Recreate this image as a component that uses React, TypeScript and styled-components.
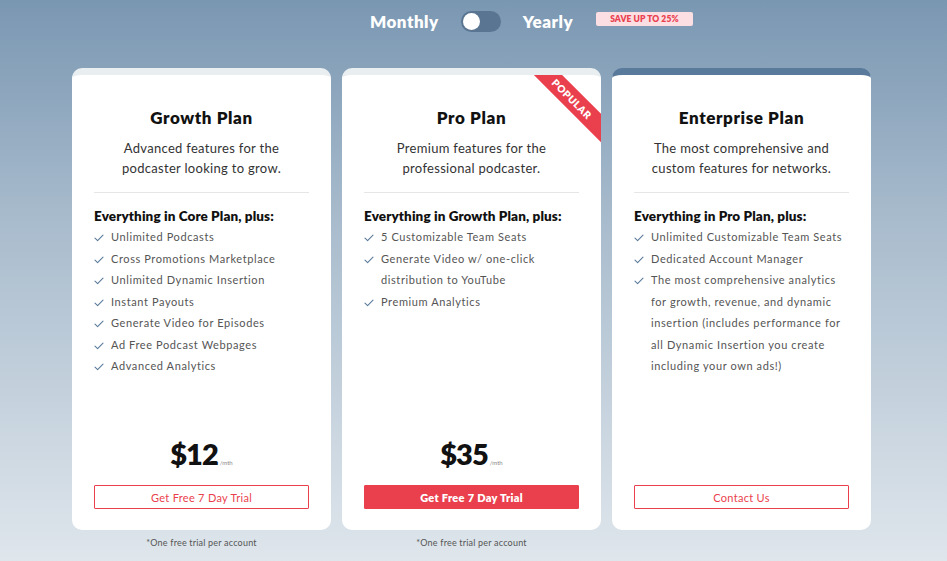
import React from "react";
import styled, { createGlobalStyle } from "styled-components";

const Global = createGlobalStyle`
  html, body { margin: 0; padding: 0; }
  body {
    font-family: "Lato", "Noto Sans", sans-serif;
    background: #dfe6ec;
  }
  * { box-sizing: border-box; }
`;

const Page = styled.div`
  width: 947px;
  height: 561px;
  overflow: hidden;
  padding-right: 4px;
  background: linear-gradient(180deg, #7a97b2 0%, #a9bccd 40%, #dfe6ec 100%);
  display: flex;
  flex-direction: column;
  align-items: center;
`;

const Header = styled.div`
  position: relative;
  display: flex;
  align-items: center;
  gap: 22px;
  height: 43px;
`;

const Label = styled.span`
  color: #ffffff;
  font-size: 17px;
  font-weight: 800;
  letter-spacing: 0.5px;
`;

const Track = styled.div`
  width: 40px;
  height: 21px;
  border-radius: 11px;
  background: #5a7591;
  padding: 2px;
  display: flex;
  align-items: center;
`;

const Knob = styled.div`
  width: 17px;
  height: 17px;
  border-radius: 50%;
  background: #ffffff;
`;

const Badge = styled.span`
  position: absolute;
  left: 226px;
  top: 12px;
  width: 97px;
  height: 14px;
  border-radius: 2px;
  background: #fcdfe2;
  color: #e8404f;
  font-size: 8.5px;
  font-weight: 800;
  display: flex;
  align-items: center;
  justify-content: center;
  letter-spacing: 0.1px;
`;

const Row = styled.div`
  display: flex;
  gap: 11px;
  margin-top: 25px;
  align-items: flex-start;
`;

const Column = styled.div`
  display: flex;
  flex-direction: column;
  align-items: center;
`;

const Card = styled.div<{ $accent: string }>`
  position: relative;
  overflow: hidden;
  width: 259px;
  height: 462px;
  background: #ffffff;
  border-radius: 10px;
  border-top: 7px solid ${(p) => p.$accent};
  display: flex;
  flex-direction: column;
  padding: 0 22px 21px;
`;

const Title = styled.h2`
  margin: 32px 0 0;
  text-align: center;
  font-size: 17px;
  line-height: 22px;
  font-weight: 800;
  color: #111111;
  letter-spacing: 0.6px;
`;

const Desc = styled.p`
  margin: 9px 0 0;
  text-align: center;
  font-size: 13px;
  line-height: 20px;
  font-weight: 400;
  color: #333333;
  letter-spacing: 0.3px;
`;

const Divider = styled.hr`
  margin: 14px 0 0;
  border: none;
  border-top: 1px solid #e6e6e6;
`;

const SubHead = styled.h3`
  margin: 14px 0 0;
  font-size: 13.5px;
  line-height: 18px;
  font-weight: 800;
  color: #111111;
  letter-spacing: 0.1px;
`;

const List = styled.ul`
  list-style: none;
  margin: 1px 0 0;
  padding: 0;
  flex: 1;
`;

const Item = styled.li`
  display: flex;
  gap: 6px;
  font-size: 11px;
  line-height: 21.5px;
  color: #555555;
  letter-spacing: 0.6px;
`;

const CheckBox = styled.span`
  flex: none;
  width: 11px;
  height: 21.5px;
  display: flex;
  align-items: center;
  padding-top: 3px;
`;

const Price = styled.div`
  display: flex;
  align-items: baseline;
  justify-content: center;
  height: 34px;
  margin-bottom: 14px;
`;

const Amount = styled.span`
  font-size: 29px;
  font-weight: 800;
  color: #111111;
  line-height: 34px;
  letter-spacing: -1px;
`;

const Per = styled.span`
  font-size: 6px;
  color: #888888;
  margin-left: 2px;
`;

const Button = styled.button<{ $filled?: boolean }>`
  height: 24px;
  width: 100%;
  border: 1px solid #ea3f4d;
  border-radius: 1px;
  background: ${(p) => (p.$filled ? "#ea3f4d" : "#ffffff")};
  color: ${(p) => (p.$filled ? "#ffffff" : "#ea3f4d")};
  font-family: inherit;
  font-size: 11px;
  font-weight: ${(p) => (p.$filled ? 800 : 400)};
  letter-spacing: 0.3px;
  cursor: pointer;
`;

const Footnote = styled.div`
  margin-top: 7px;
  font-size: 9px;
  color: #555555;
  letter-spacing: 0.2px;
`;

const Ribbon = styled.div`
  position: absolute;
  left: 168px;
  top: 14px;
  width: 124px;
  height: 20px;
  background: #ea3f4d;
  color: #ffffff;
  font-size: 10px;
  font-weight: 800;
  letter-spacing: 0.6px;
  display: flex;
  align-items: center;
  justify-content: center;
  transform: rotate(45deg);
`;

const Check = () => (
  <svg width="10" height="8" viewBox="0 0 10 8" fill="none">
    <path d="M1 4.2 L3.6 6.6 L9 1.2" stroke="#5b7b9b" strokeWidth="1.1" strokeLinecap="round" strokeLinejoin="round" />
  </svg>
);

type Plan = {
  title: string;
  desc: [string, string];
  head: string;
  features: string[];
  price?: string;
  cta: string;
  filled?: boolean;
  accent: string;
  popular?: boolean;
  footnote?: boolean;
};

const plans: Plan[] = [
  {
    title: "Growth Plan",
    desc: ["Advanced features for the", "podcaster looking to grow."],
    head: "Everything in Core Plan, plus:",
    features: [
      "Unlimited Podcasts",
      "Cross Promotions Marketplace",
      "Unlimited Dynamic Insertion",
      "Instant Payouts",
      "Generate Video for Episodes",
      "Ad Free Podcast Webpages",
      "Advanced Analytics",
    ],
    price: "$12",
    cta: "Get Free 7 Day Trial",
    accent: "#e9eef0",
    footnote: true,
  },
  {
    title: "Pro Plan",
    desc: ["Premium features for the", "professional podcaster."],
    head: "Everything in Growth Plan, plus:",
    features: [
      "5 Customizable Team Seats",
      "Generate Video w/ one-click distribution to YouTube",
      "Premium Analytics",
    ],
    price: "$35",
    cta: "Get Free 7 Day Trial",
    filled: true,
    accent: "#e9eef0",
    popular: true,
    footnote: true,
  },
  {
    title: "Enterprise Plan",
    desc: ["The most comprehensive and", "custom features for networks."],
    head: "Everything in Pro Plan, plus:",
    features: [
      "Unlimited Customizable Team Seats",
      "Dedicated Account Manager",
      "The most comprehensive analytics for growth, revenue, and dynamic insertion (includes performance for all Dynamic Insertion you create including your own ads!)",
    ],
    cta: "Contact Us",
    accent: "#5a7a9b",
  },
];

export default function App() {
  return (
    <>
      <Global />
      <Page>
        <Header>
          <Label>Monthly</Label>
          <Track>
            <Knob />
          </Track>
          <Label>Yearly</Label>
          <Badge>SAVE UP TO 25%</Badge>
        </Header>
        <Row>
          {plans.map((p) => (
            <Column key={p.title}>
              <Card $accent={p.accent}>
                {p.popular && <Ribbon>POPULAR</Ribbon>}
                <Title>{p.title}</Title>
                <Desc>
                  {p.desc[0]}
                  <br />
                  {p.desc[1]}
                </Desc>
                <Divider />
                <SubHead>{p.head}</SubHead>
                <List>
                  {p.features.map((f) => (
                    <Item key={f}>
                      <CheckBox>
                        <Check />
                      </CheckBox>
                      <span>{f}</span>
                    </Item>
                  ))}
                </List>
                {p.price && (
                  <Price>
                    <Amount>{p.price}</Amount>
                    <Per>/mth</Per>
                  </Price>
                )}
                <Button $filled={p.filled}>{p.cta}</Button>
              </Card>
              {p.footnote && <Footnote>*One free trial per account</Footnote>}
            </Column>
          ))}
        </Row>
      </Page>
    </>
  );
}
